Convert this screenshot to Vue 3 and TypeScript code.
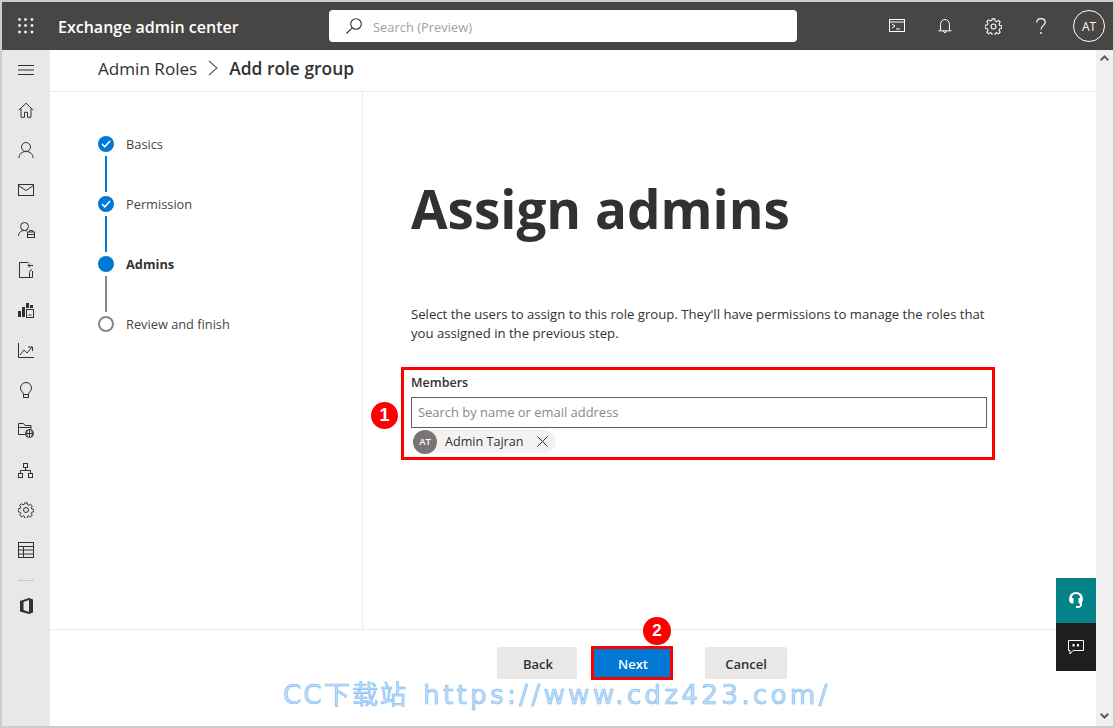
<script setup lang="ts">
interface Step { label: string; state: 'done' | 'current' | 'todo' }
const steps: Step[] = [
  { label: 'Basics', state: 'done' },
  { label: 'Permission', state: 'done' },
  { label: 'Admins', state: 'current' },
  { label: 'Review and finish', state: 'todo' },
]
const waffle = [2.5, 8.5, 15].flatMap((y) => [2.5, 8.5, 15].map((x) => ({ x, y })))
</script>

<template>
  <div class="frame">
    <header class="topbar">
      <div class="waffle">
        <svg width="18" height="18" viewBox="0 0 18 18"><rect v-for="d in waffle" :key="`${d.x}-${d.y}`" :x="d.x - 1.2" :y="d.y - 1.2" width="2.4" height="2.4" fill="#fff" /></svg>
      </div>
      <div class="title">Exchange admin center</div>
      <div class="search">
        <svg width="18" height="18" viewBox="0 0 18 18" fill="none" stroke="#323130" stroke-width="1.1"><circle cx="11" cy="7" r="5.3" /><path d="M7.2 10.8 1.5 16.5" /></svg>
        <span class="search-text">Search (Preview)</span>
      </div>
      <div class="top-icons">
        <svg class="t1" width="16" height="14" viewBox="0 0 16 14" fill="none" stroke="#fff" stroke-width="1"><rect x=".5" y=".5" width="15" height="12" /><path d="M.5 3h15M3 5l3 2-3 2M7 10h4" /></svg>
        <svg class="t2" width="16" height="16" viewBox="0 0 16 16" fill="none" stroke="#fff" stroke-width="1"><path d="M3.500 12.500V6.500a4.500 5 0 0 1 9 0v6M1.500 12.800h13M6.500 13c0 2 3 2 3 0" /></svg>
        <svg class="t3" width="17" height="17" viewBox="0 0 16 16" fill="none" stroke="#fff" stroke-width="1"><circle cx="8" cy="8" r="2.300" /><path d="M6.800.8h2.400l.4 2 1.300.6 1.800-1.100 1.600 1.600-1.100 1.800.6 1.300 2 .4v2.400l-2 .4-.6 1.300 1.100 1.800-1.600 1.600-1.800-1.100-1.300.6-.4 2H6.800l-.4-2-1.300-.6-1.800 1.100-1.600-1.600 1.100-1.800-.6-1.300-2-.4V6.800l2-.4.6-1.300-1.100-1.800 1.600-1.600 1.800 1.100 1.300-.6z" /></svg>
        <svg class="t4" width="10" height="17" viewBox="0 0 10 17" fill="none" stroke="#fff" stroke-width="1.200"><path d="M.8 4.500C.8 2.200 2.600.6 5 .6s4.200 1.600 4.200 3.700c0 3.200-4.200 3.500-4.200 7.200" /><circle cx="5" cy="15" r=".9" fill="#fff" stroke="none" /></svg>
        <div class="me">AT</div>
      </div>
    </header>

    <div class="body">
      <nav class="rail">
        <div class="rail-item"><svg width="16" height="10" viewBox="0 0 16 10" stroke="#323130"><path d="M0 .5h16M0 5h16M0 9.500h16" /></svg></div>
        <div class="rail-item"><svg width="16" height="16" viewBox="0 0 16 16" fill="none" stroke="#323130"><path d="M.8 8.200 8 1.200l7.200 7M3 6.500v8.800h3.500v-5h3v5H13V6.500" /></svg></div>
        <div class="rail-item"><svg width="16" height="16" viewBox="0 0 16 16" fill="none" stroke="#323130"><circle cx="8" cy="5" r="4.500" /><path d="M1 16c0-4 3-6.500 7-6.500s7 2.500 7 6.500" /></svg></div>
        <div class="rail-item"><svg width="16" height="12" viewBox="0 0 16 12" fill="none" stroke="#323130"><rect x=".5" y=".5" width="15" height="11" /><path d="m.5 1.500 7.500 5 7.500-5" /></svg></div>
        <div class="rail-item"><svg width="17" height="16" viewBox="0 0 17 16" fill="none" stroke="#323130"><circle cx="6.500" cy="4.500" r="4" /><path d="M.5 14c0-3.500 2.500-5.500 6-5.500 1 0 1.800.2 2.500.5" /><rect x="9.500" y="10" width="7" height="5.500" /><path d="M11.500 10V8.500h3V10M9.500 12.500h7" /></svg></div>
        <div class="rail-item"><svg width="15" height="16" viewBox="0 0 15 16" fill="none" stroke="#323130"><path d="M9.500.5H.5v15h13V9M14 3.500H9M11 1.500l-2 2 2 2M13 8c-2 0-2.500 1-2.500 2.500v5" /></svg></div>
        <div class="rail-item"><svg width="16" height="16" viewBox="0 0 16 16"><rect x="0" y="9" width="3" height="6" fill="#323130" /><rect x="4" y="5" width="3" height="10" fill="#323130" /><rect x="8" y="1" width="3" height="5" fill="#323130" /><rect x="12" y="3" width="3" height="3" fill="#323130" /><rect x="8.500" y="7.500" width="7" height="8" fill="none" stroke="#323130" /><path d="M10.500 13h3" stroke="#323130" /></svg></div>
        <div class="rail-item"><svg width="16" height="15" viewBox="0 0 16 15" fill="none" stroke="#323130"><path d="M.5 0v14.500H16M2 12l4-5 3 3 5-6M10 4h4.500v4" /></svg></div>
        <div class="rail-item"><svg width="12" height="16" viewBox="0 0 12 16" fill="none" stroke="#323130"><path d="M3.500 15.500h5V12c0-1.500 3-3 3-6a5.500 5.500 0 0 0-11 0c0 3 3 4.500 3 6zM3.500 12.500h5" /></svg></div>
        <div class="rail-item"><svg width="16" height="15" viewBox="0 0 16 15" fill="none" stroke="#323130"><path d="M7 11.500H.5V.5h5l1.500 2h6v4M.5 4.500h12.500" /><circle cx="11.500" cy="10.500" r="4" /><path d="M7.500 10.500h8M11.500 6.500v8M9.500 7c-1 2-1 5 0 7M13.500 7c1 2 1 5 0 7" /></svg></div>
        <div class="rail-item"><svg width="16" height="15" viewBox="0 0 16 15" fill="none" stroke="#323130"><rect x="5.500" y=".5" width="4" height="4" /><rect x=".5" y="10.500" width="4" height="4" /><rect x="10.500" y="10.500" width="4" height="4" /><path d="M7.500 4.500v3M2.500 10.500v-3h10v3" /></svg></div>
        <div class="rail-item"><svg width="16" height="16" viewBox="0 0 16 16" fill="none" stroke="#323130"><circle cx="8" cy="8" r="2.500" /><path d="M6.800.8h2.400l.4 2 1.300.6 1.800-1.100 1.600 1.600-1.100 1.800.6 1.300 2 .4v2.400l-2 .4-.6 1.300 1.100 1.800-1.600 1.600-1.800-1.100-1.300.6-.4 2H6.800l-.4-2-1.300-.6-1.800 1.100-1.600-1.600 1.100-1.800-.6-1.300-2-.4V6.800l2-.4.6-1.300-1.100-1.800 1.600-1.600 1.800 1.100 1.300-.6z" /></svg></div>
        <div class="rail-item"><svg width="16" height="16" viewBox="0 0 16 16" fill="none" stroke="#323130"><rect x=".5" y=".5" width="15" height="15" /><path d="M.5 4.500h15M.5 8h15M.5 12h15M5.500 4.500v11" /></svg></div>
        <div class="rail-sep"></div>
        <div class="rail-item"><svg width="13" height="16" viewBox="0 0 13 16"><path d="M0 3 9 0l4 1.500v13L9 16l-9-2.500zM9 2 3.500 4v8L9 14z" fill="#323130" fill-rule="evenodd" /></svg></div>
      </nav>

      <main class="main">
        <div class="crumb">
          <span>Admin Roles</span>
          <svg width="10" height="16" viewBox="0 0 10 16" fill="none" stroke="#605e5c" stroke-width="1.100"><path d="m1 1 8 7-8 7" /></svg>
          <strong>Add role group</strong>
        </div>
        <div class="wizard">
          <aside class="steps">
            <div v-for="(s, i) in steps" :key="s.label" class="step" :class="s.state">
              <div class="marker">
                <span class="dot">
                  <svg v-if="s.state === 'done'" width="10" height="8" viewBox="0 0 10 8" fill="none" stroke="#fff" stroke-width="1.600"><path d="m1 4 2.800 2.800L9 1" /></svg>
                </span>
                <span v-if="i < steps.length - 1" class="line"></span>
              </div>
              <span class="step-label">{{ s.label }}</span>
            </div>
          </aside>
          <section class="content">
            <h1>Assign admins</h1>
            <p class="lead">Select the users to assign to this role group. They'll have permissions to manage the roles that you assigned in the previous step.</p>
            <div class="members">
              <span class="badge one">1</span>
              <label>Members</label>
              <div class="field">Search by name or email address</div>
              <div class="chip">
                <span class="avatar">AT</span>
                <span class="chip-name">Admin Tajran</span>
                <svg width="11" height="11" viewBox="0 0 11 11" stroke="#323130" stroke-width="1"><path d="m.5.500 10 10m0-10-10 10" /></svg>
              </div>
            </div>
          </section>
        </div>
        <footer class="actions">
          <button class="btn back">Back</button>
          <button class="btn primary"><span class="btn-text">Next</span><span class="badge two">2</span></button>
          <button class="btn cancel">Cancel</button>
        </footer>
        <div class="float-btns">
          <div class="fb teal"><svg width="14" height="17" viewBox="0 0 14 17"><path d="M7 0a7 7 0 0 0-7 7c0 2.500 1 4 3 4.500h1.500V6H3a4 4 0 0 1 8 0H9.500v5.500H11v1c0 1-1 1.500-2 1.500H7v2h2c2 0 4-1.500 4-3.500V10c.7-.8 1-1.800 1-3a7 7 0 0 0-7-7z" fill="#fff" /></svg></div>
          <div class="fb dark"><svg width="16" height="15" viewBox="0 0 16 15" fill="none" stroke="#fff"><path d="M.5.500h15v10H5l-3 3.500v-3.500H.5z" /><rect x="4.500" y="4" width="2" height="2.500" fill="#fff" stroke="none" /><rect x="9" y="4" width="2" height="2.500" fill="#fff" stroke="none" /></svg></div>
        </div>
        <div class="watermark"><span class="wm-cn">CC下载站</span><span class="wm-url">https://www.cdz423.com/</span></div>
      </main>

      <div class="scrollbar">
        <svg width="9" height="6" viewBox="0 0 9 6" fill="none" stroke="#5c5c5c" stroke-width="2"><path d="m.7 5.300 3.800-3.800 3.800 3.800" /></svg>
        <svg width="9" height="6" viewBox="0 0 9 6" fill="none" stroke="#5c5c5c" stroke-width="2"><path d="m.7.700 3.800 3.800L8.300.7" /></svg>
      </div>
    </div>
  </div>
</template>

<style scoped>
.frame {
  width: 1115px;
  height: 728px;
  box-sizing: border-box;
  border: 2px solid #cdcdcd;
  display: flex;
  flex-direction: column;
  overflow: hidden;
  background: #fff;
  color: #323130;
  font-family: "Open Sans", "Noto Sans CJK SC", sans-serif;
}
.topbar {
  height: 48px;
  flex: none;
  background: #484644;
  display: flex;
  align-items: center;
  color: #fff;
}
.waffle {
  width: 48px;
  display: flex;
  justify-content: center;
}
.title {
  width: 271px;
  padding: 1px 0 0 8px;
  box-sizing: border-box;
  font-size: 16px;
  font-weight: 600;
  white-space: nowrap;
}
.search {
  width: 468px;
  height: 32px;
  margin-left: 8px;
  background: #fff;
  border-radius: 4px;
  display: flex;
  align-items: center;
  gap: 10px;
  padding-left: 16px;
  box-sizing: border-box;
  font-size: 12.900px;
  color: #a19f9d;
}
.search-text { padding-top: 2px; }
.top-icons {
  flex: 1;
  display: flex;
  align-items: center;
  padding-left: 92px;
}
.t1 { margin-right: 32px; }
.t2 { margin-right: 32px; }
.t3 { margin-right: 34px; }
.t4 { margin-right: 27px; }
.me {
  width: 30px;
  height: 30px;
  border: 1px solid #fff;
  border-radius: 50%;
  display: flex;
  align-items: center;
  justify-content: center;
  font-size: 12px;
}
.body {
  flex: 1;
  display: flex;
  min-height: 0;
}
.rail {
  width: 48px;
  flex: none;
  background: #e8e8e8;
  display: flex;
  flex-direction: column;
  align-items: center;
}
.rail-item {
  height: 40px;
  flex: none;
  display: flex;
  align-items: center;
  justify-content: center;
}
.rail-sep {
  width: 16px;
  height: 1px;
  flex: none;
  background: #c8c6c4;
  margin: 10px 0 5px;
}
.main {
  flex: 1;
  min-width: 0;
  position: relative;
  display: flex;
  flex-direction: column;
}
.crumb {
  height: 42px;
  flex: none;
  box-sizing: border-box;
  border-bottom: 1px solid #edebe9;
  display: flex;
  align-items: center;
  padding: 0 0 5px 48px;
  font-size: 17.100px;
  gap: 11px;
}
.crumb strong { font-weight: 600; font-size: 17.400px; }
.wizard {
  flex: 1;
  display: flex;
  min-height: 0;
}
.steps {
  width: 313px;
  flex: none;
  box-sizing: border-box;
  border-right: 1px solid #edebe9;
  padding: 44px 0 0 48px;
}
.step {
  height: 60px;
  display: flex;
  gap: 12px;
  font-size: 12.800px;
}
.marker {
  width: 16px;
  display: flex;
  flex-direction: column;
  align-items: center;
}
.dot {
  width: 16px;
  height: 16px;
  flex: none;
  box-sizing: border-box;
  border-radius: 50%;
  background: #0078d4;
  display: flex;
  align-items: center;
  justify-content: center;
}
.todo .dot {
  background: #fff;
  border: 2px solid #8a8886;
}
.line {
  width: 2px;
  height: 36px;
  margin-top: 4px;
  background: #0078d4;
}
.current .line { background: #8a8886; }
.step-label {
  line-height: 16px;
  color: #484644;
}
.current .step-label {
  font-weight: 700;
  color: #323130;
}
.content {
  flex: 1;
  padding-left: 38px;
}
h1 {
  margin: 84px 0 0 10px;
  font-size: 53px;
  line-height: 66px;
  font-weight: 700;
  color: #323130;
}
.lead {
  width: 585px;
  margin: 63px 0 0 10px;
  font-size: 13.150px;
  line-height: 19px;
}
.members {
  width: 594px;
  height: 93px;
  box-sizing: border-box;
  position: relative;
  margin-top: 24px;
  border: 3px solid #f00;
  padding: 4px 7px 0;
  display: flex;
  flex-direction: column;
  align-items: flex-start;
}
label {
  font-size: 12.500px;
  font-weight: 600;
  line-height: 18px;
}
.field {
  width: 576px;
  height: 31px;
  margin-top: 5px;
  box-sizing: border-box;
  border: 1px solid #605e5c;
  padding: 0 0 2px 6px;
  display: flex;
  align-items: center;
  font-size: 12.950px;
  color: #8a8886;
}
.chip {
  height: 23px;
  margin: 2px 0 0 2px;
  width: 143px;
  box-sizing: border-box;
  border-radius: 12px;
  background: #f3f2f1;
  display: flex;
  align-items: center;
  font-size: 12.600px;
}
.avatar {
  width: 24px;
  height: 24px;
  border-radius: 50%;
  flex: none;
  background: #7a7574;
  color: #fff;
  font-size: 9.500px;
  font-weight: 600;
  display: flex;
  align-items: center;
  justify-content: center;
}
.chip-name {
  margin: 0 14px 0 8px;
  white-space: nowrap;
}
.badge {
  position: absolute;
  border-radius: 50%;
  background: #f00;
  color: #fff;
  font-family: "Liberation Sans", sans-serif;
  font-weight: 700;
  display: flex;
  align-items: center;
  justify-content: center;
}
.badge.one {
  width: 27px;
  height: 27px;
  left: -33px;
  top: 32px;
  font-size: 18px;
}
.badge.two {
  width: 28px;
  height: 28px;
  left: 49px;
  top: -32px;
  font-size: 17px;
}
.actions {
  height: 97px;
  flex: none;
  box-sizing: border-box;
  border-top: 1px solid #edebe9;
  padding: 17px 0 0 447px;
  display: flex;
  align-items: flex-start;
}
.btn {
  position: relative;
  width: 80px;
  height: 32px;
  box-sizing: border-box;
  border: 0;
  border-radius: 2px;
  background: #e8e8e8;
  color: #323130;
  font: 600 13px "Open Sans", sans-serif;
  padding: 1px 0 0;
}
.btn.back { padding-left: 2px; }
.btn.primary {
  width: 82px;
  height: 34px;
  margin: -1px 0 0 14px;
  border: 3px solid #f00;
  border-radius: 0;
  background: #0078d4;
  color: #fff;
  padding-left: 2px;
}
.btn.cancel {
  width: 82px;
  margin-left: 32px;
}
.float-btns {
  position: absolute;
  right: 0;
  top: 528px;
  width: 40px;
}
.fb {
  display: flex;
  align-items: center;
  justify-content: center;
}
.fb.teal { height: 45px; background: #038387; }
.fb.dark { height: 48px; background: #201f1e; }
.watermark {
  position: absolute;
  left: 233px;
  top: 628px;
  display: flex;
  font-family: "DejaVu Sans", "Noto Sans CJK SC", sans-serif;
  font-size: 26px;
  line-height: 34px;
  white-space: nowrap;
  color: #bfe0fb;
  -webkit-text-stroke: 0.600px #7ab8ee;
}
.wm-cn {
  width: 140px;
  letter-spacing: 2.200px;
}
.wm-url {
  letter-spacing: 3.400px;
}
.scrollbar {
  width: 17px;
  flex: none;
  background: #f0f0f0;
  display: flex;
  flex-direction: column;
  align-items: center;
  justify-content: space-between;
  padding: 5px 0 7px;
  box-sizing: border-box;
}
</style>
